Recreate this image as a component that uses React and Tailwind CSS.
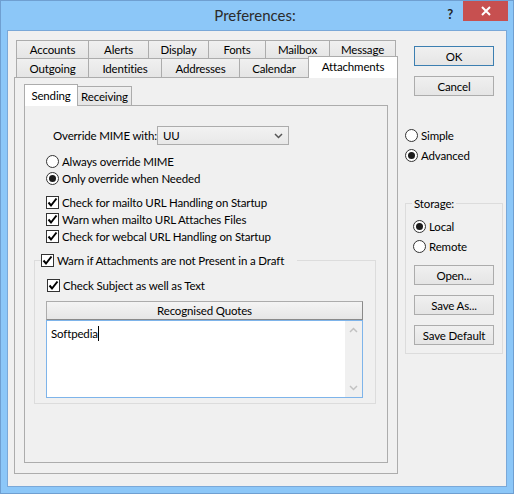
import React from 'react';

const FONT = "font-['Lato','Noto_Sans',sans-serif]";

const Radio = ({ checked, label, className = '' }) => (
  <div className={`flex items-center h-[17px] ${className}`}>
    <span className="w-[13px] h-[13px] rounded-full border border-[#333] bg-white flex items-center justify-center shrink-0">
      {checked && <span className="w-[7px] h-[7px] rounded-full bg-[#1c1c1c]" />}
    </span>
    <span className="ml-[3px] whitespace-nowrap">{label}</span>
  </div>
);

const Check = ({ label, className = '' }) => (
  <div className={`flex items-center h-[17px] ${className}`}>
    <span className="w-[13px] h-[13px] border border-[#333] bg-white flex items-center justify-center shrink-0">
      <svg width="11" height="11" viewBox="0 0 11 11">
        <path d="M1.5 5.5 L4 8.5 L9.5 1.5" fill="none" stroke="#000" strokeWidth="2" />
      </svg>
    </span>
    <span className="ml-[3px] whitespace-nowrap">{label}</span>
  </div>
);

const Button = ({ label, primary, className = '' }) => (
  <div
    className={`w-[80px] h-[20px] flex items-center justify-center border bg-gradient-to-b from-[#f0f0f0] to-[#e5e5e5] ${
      primary ? 'border-[#3c7fb1]' : 'border-[#acacac]'
    } ${className}`}
  >
    {label}
  </div>
);

const Tab = ({ label, w, last }) => (
  <div
    className={`h-full flex items-center justify-center border-t border-l border-[#acacac] bg-gradient-to-b from-[#f0f0f0] to-[#e5e5e5] ${
      last ? 'border-r' : ''
    }`}
    style={{ width: w }}
  >
    {label}
  </div>
);

export default function App() {
  return (
    <div className={`w-[514px] h-[494px] bg-[#8cc7f8] border border-[#6f9fd1] flex flex-col text-[11.5px] tracking-[-0.15px] leading-[15px] text-black ${FONT}`}>
      {/* title bar */}
      <div className="h-[29px] grid grid-cols-[1fr_auto_1fr] shrink-0">
        <div />
        <div className="pt-[4px] pr-[4px] text-[15px] tracking-normal text-[#2b2b2b] leading-[20px]">Preferences:</div>
        <div className="flex justify-end items-start pr-[5px]">
          <div className="mt-[5px] mr-[10px] text-[13px] font-bold text-[#222] leading-[16px]">?</div>
          <div className="w-[45px] h-[20px] bg-[#c75050] flex items-center justify-center">
            <svg width="10" height="10" viewBox="0 0 10 10">
              <path d="M1 1 L9 9 M9 1 L1 9" stroke="#fff" strokeWidth="2" />
            </svg>
          </div>
        </div>
      </div>

      {/* client area */}
      <div className="ml-[6px] w-[500px] h-[457px] border border-[#7aa8d8] bg-[#f0f0f0] flex items-start pl-[6px] pt-[9px]">
        {/* tab control */}
        <div className="w-[384px] flex flex-col">
          <div className="flex h-[18px] pl-[2px]">
            <Tab label="Accounts" w={72} />
            <Tab label="Alerts" w={60} />
            <Tab label="Display" w={60} />
            <Tab label="Fonts" w={57} />
            <Tab label="Mailbox" w={64} />
            <Tab label="Message" w={67} last />
          </div>
          <div className="flex h-[19px] pl-[2px]">
            <Tab label="Outgoing" w={72} />
            <Tab label="Identities" w={73} />
            <Tab label="Addresses" w={78} />
            <Tab label="Calendar" w={69} />
            <div className="relative z-10 -mt-[2px] w-[90px] h-[22px] bg-white border border-b-0 border-[#acacac] flex items-start justify-center pt-[2px]">
              Attachments
            </div>
          </div>
          {/* outer panel */}
          <div className="h-[397px] border border-[#acacac] bg-[#f0f0f0] pl-[9px] pt-[8px]">
            <div className="flex h-[19px]">
              <div className="relative z-10 -mt-[2px] w-[54px] h-[22px] bg-white border border-b-0 border-[#acacac] flex items-start justify-center pt-[3px]">
                Sending
              </div>
              <div className="w-[54px] h-full border-t border-r border-[#acacac] bg-gradient-to-b from-[#f0f0f0] to-[#e5e5e5] flex items-center justify-center">
                Receiving
              </div>
            </div>
            {/* inner panel */}
            <div className="w-[364px] h-[358px] border border-[#acacac] bg-[#f0f0f0] flex flex-col">
              <div className="mt-[20px] flex items-center h-[19px] pl-[28px]">
                <span className="w-[104px] whitespace-nowrap">Override MIME with:</span>
                <div className="w-[132px] h-[19px] border border-[#acacac] bg-gradient-to-b from-[#f2f2f2] to-[#e8e8e8] flex items-center justify-between pl-[5px] pr-[5px]">
                  <span>UU</span>
                  <svg width="9" height="6" viewBox="0 0 9 6">
                    <path d="M1 1 L4.5 4.5 L8 1" fill="none" stroke="#555" strokeWidth="1.5" />
                  </svg>
                </div>
              </div>
              <div className="pl-[21px] mt-[8px]">
                <Radio label="Always override MIME" />
                <Radio checked label="Only override when Needed" />
              </div>
              <div className="pl-[21px] mt-[7px]">
                <Check label="Check for mailto URL Handling on Startup" />
                <Check label="Warn when mailto URL Attaches Files" />
                <Check label="Check for webcal URL Handling on Startup" />
              </div>
              <fieldset className="ml-[9px] mt-[7px] w-[342px] border border-[#dcdcdc] pb-[5px]">
                <legend className="ml-[6px] pr-[13px]">
                  <Check label="Warn if Attachments are not Present in a Draft" />
                </legend>
                <div className="pl-[11px]">
                  <Check label="Check Subject as well as Text" className="mt-[8px] ml-px" />
                  <div className="mt-[7px] w-[317px]">
                    <div className="h-[19px] border border-[#acacac] border-r-[#8a8a8a] border-b-[#8a8a8a] bg-gradient-to-b from-[#f4f4f4] to-[#e6e6e6] flex items-center justify-center">
                      Recognised Quotes
                    </div>
                    <div className="h-[78px] border border-[#7eb4ea] bg-white flex">
                      <div className="flex-1 pl-[4px] pt-[5px] flex items-start">
                        <span>Softpedia</span>
                        <span className="w-px h-[15px] bg-black" />
                      </div>
                      <div className="w-[17px] bg-[#f0f0f0] flex flex-col justify-between items-center py-[6px]">
                        <svg width="9" height="6" viewBox="0 0 9 6">
                          <path d="M1 5 L4.5 1.5 L8 5" fill="none" stroke="#c2c2c2" strokeWidth="1.5" />
                        </svg>
                        <svg width="9" height="6" viewBox="0 0 9 6">
                          <path d="M1 1 L4.5 4.5 L8 1" fill="none" stroke="#c2c2c2" strokeWidth="1.5" />
                        </svg>
                      </div>
                    </div>
                  </div>
                </div>
              </fieldset>
            </div>
          </div>
        </div>

        {/* right column */}
        <div className="ml-[7px] w-[98px] flex flex-col mt-[6px]">
          <Button label="OK" primary className="ml-[9px]" />
          <Button label="Cancel" className="ml-[9px] mt-[10px]" />
          <Radio label="Simple" className="mt-[31px]" />
          <Radio checked label="Advanced" className="mt-[3px]" />
          <fieldset className="mt-[32px] w-[98px] border border-[#dcdcdc] pb-[8px]">
            <legend className="ml-[6px] px-[2px]">Storage:</legend>
            <div className="pl-[7px]">
              <Radio checked label="Local" className="mt-[7px]" />
              <Radio label="Remote" className="mt-[3px]" />
              <Button label="Open..." className="mt-[10px] ml-px" />
              <Button label="Save As..." className="mt-[10px] ml-px" />
              <Button label="Save Default" className="mt-[10px] ml-px" />
            </div>
          </fieldset>
        </div>
      </div>
    </div>
  );
}
